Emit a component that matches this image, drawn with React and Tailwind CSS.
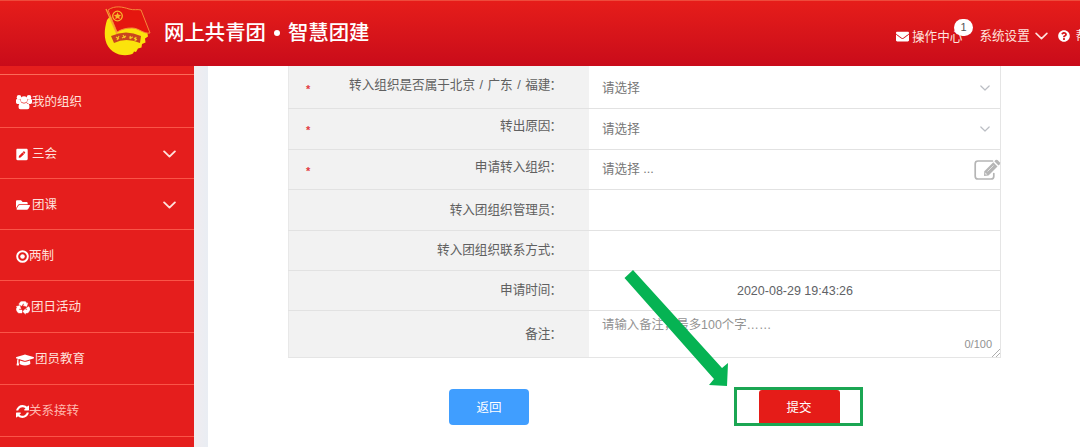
import React from "react";
import { FaPenSquare, FaFolderOpen, FaGraduationCap, FaEnvelope, FaQuestionCircle } from "react-icons/fa";

function Chevron({ className }) {
  return (
    <svg viewBox="0 0 14 8" className={className} fill="none" stroke="currentColor">
      <path d="M1.2 1.2 7 6.8l5.8-5.6" strokeLinecap="round" strokeLinejoin="round" />
    </svg>
  );
}

function UsersIcon({ className }) {
  return (
    <svg viewBox="0 0 16 16" className={className} fill="currentColor">
      <circle cx="3" cy="3.400" r="2.300" />
      <circle cx="13" cy="3.400" r="2.300" />
      <circle cx="8" cy="5.500" r="3.300" />
      <path d="M0 6.300q0-1.300 1.300-1.200l3 .6q.2 2 1.400 3L4 10H1.500Q0 9.800 0 8.500ZM16 6.300q0-1.300-1.300-1.200l-3 .6q-.2 2-1.400 3L12 10h2.500q1.500-.2 1.500-1.500ZM2.500 13q0-4 3-4.200 2.500 1.200 5 0 3 .2 3 4.200 0 2.300-2 2.300h-7q-2 0-2-2.300Z" />
    </svg>
  );
}

function TargetIcon({ className }) {
  return (
    <svg viewBox="0 0 12 12" className={className}>
      <circle cx="6" cy="6" r="4.900" fill="none" stroke="currentColor" strokeWidth="1.800" />
      <circle cx="6" cy="6" r="2.100" fill="currentColor" />
    </svg>
  );
}

function RecycleIcon({ className }) {
  return (
    <svg viewBox="0 0 14 14" className={className} fill="currentColor" stroke="currentColor" strokeWidth=".4">
      <path d="M4.200 1.200Q4.800.4 5.800.4h3q.8 0 1.300.8l.7 1.200 1-.5-1 3.700-3.600-1 1-.6-1-1.700-1.500 2.600-2.900-1.700Z" />
      <path d="m10.300 7.100 2.600-1.500 1 1.800q.4.800 0 1.600l-1.200 2.100q-.5.900-1.600.9H9.500v1.200L6.800 10.500l2.700-2.800V9h1.800Z" />
      <path d="M6 9v3H3.100q-1 0-1.500-.8L.4 9.100q-.4-.8 0-1.600l.8-1.400-1-.6 3.700-1 1 3.600-1-.6L2.700 9Z" />
    </svg>
  );
}

function RefreshIcon({ className }) {
  return (
    <svg viewBox="0 0 1536 1536" className={className} fill="currentColor">
      <path d="M1511 928q0 5-1 7-64 268-268 434.500T764 1536q-146 0-282.500-55T238 1324l-129 129q-19 19-45 19t-45-19-19-45V960q0-26 19-45t45-19h448q26 0 45 19t19 45-19 45l-137 137q71 66 161 102t187 36q134 0 250-65t186-179q11-17 53-117 8-23 30-23h192q13 0 22.500 9.500t9.500 22.500zM1536 128v448q0 26-19 45t-45 19h-448q-26 0-45-19t-19-45 19-45l138-138Q969 256 768 256q-134 0-250 65T332 500q-11 17-53 117-8 23-30 23H50q-13 0-22.500-9.500T18 608v-7q65-268 270-434.500T768 0q146 0 284 55.500T1297 212l130-129q19-19 45-19t45 19 19 45z" />
    </svg>
  );
}

function EditIcon({ className }) {
  return (
    <svg viewBox="0 0 27 22" className={className}>
      <path d="M18.500 2H4Q1.200 2 1.200 4.800v12.400Q1.200 20 4 20h13q2.800 0 2.800-2.800V14.500" fill="none" stroke="currentColor" strokeWidth="1.700" strokeLinecap="round" />
      <path d="m10.300 12.300 9-9 4.200 4.200-9 9-4.500.4Z" fill="currentColor" />
      <path d="m20.300 2.300 1.200-1.200q1-.9 2 0l2.200 2.200q.9 1 0 2l-1.200 1.200Z" fill="currentColor" />
      <path d="m11.300 13.500 1.900 1.900-1.800.2Z" fill="white" />
      <path d="m13.500 12.500 6-6" stroke="white" strokeWidth=".6" />
    </svg>
  );
}

function Emblem() {
  return (
    <svg viewBox="0 0 50 50" className="h-[50px] w-[50px] shrink-0">
      <path d="M4 14C-1 30 2 44 16 48.500c6 1.300 11 .6 14-1l1-2 2 .5 2-3.500 3.500-1 .5-3.500 3.500-1.500-.5-4 3-2-1-6-3-6-8-7-22-6Z" fill="#fbe30c" />
      <path d="M5 4c7-5 15-3 21-1 5 1.500 8 0 12 1l9 23c-7 1-11-5-18-5-6 0-10 1-15 4Z" fill="#e5160f" stroke="#f58a3a" strokeWidth="1" />
      <path d="M3 3 14 28" stroke="#f8a030" strokeWidth="1.300" />
      <circle cx="14.500" cy="10" r="4.800" fill="none" stroke="#f7b52c" strokeWidth="1.300" />
      <path d="m14.500 6.300 1.100 2.500 2.600.2-2 1.700.7 2.600-2.400-1.400-2.300 1.400.6-2.600-2-1.700 2.700-.2Z" fill="#f7b52c" />
      <path d="M8 30q15-7 30 0l-1 7q-14-6-26 0Z" fill="#c9441f" />
      <path d="m13 31 3 2m-2 1 2-4m4-1 2 3m-3 0 4-2m4 0 1 3m-2-1 4-1m3 0-1 4m-1-3 3 2" stroke="#f5cc23" strokeWidth="1.200" />
    </svg>
  );
}

const menu = [
  { label: "我的组织", icon: UsersIcon, size: "h-[16px] w-[16px]", height: "h-[53px]", gap: "" },
  { label: "三会", icon: FaPenSquare, size: "h-[13px] w-[12px]", height: "h-[51px]", gap: "gap-[4px]", open: true },
  { label: "团课", icon: FaFolderOpen, size: "h-[14px] w-[14px]", height: "h-[51px]", gap: "gap-[2px]", open: true },
  { label: "两制", icon: TargetIcon, size: "h-[13px] w-[13px]", height: "h-[51px]", gap: "" },
  { label: "团日活动", icon: RecycleIcon, size: "h-[14px] w-[14px]", height: "h-[52px]", gap: "gap-[1px]" },
  { label: "团员教育", icon: FaGraduationCap, size: "h-[16px] w-[18px]", height: "h-[52px]", gap: "gap-[1px]" },
  { label: "关系接转", icon: RefreshIcon, size: "h-[13px] w-[13px]", height: "h-[52px]", gap: "", dim: true },
];

const rows = [
  { label: "转入组织是否属于北京 / 广东 / 福建", value: "请选择", height: "h-[43px]", pad: "pb-[3px]", valuePad: "pt-[2px]", required: true, kind: "select" },
  { label: "转出原因", value: "请选择", height: "h-[41px]", pad: "pb-[5px]", valuePad: "", required: true, kind: "select" },
  { label: "申请转入组织", value: "请选择 ...", height: "h-[40px]", pad: "pb-[5px]", valuePad: "", required: true, kind: "edit" },
  { label: "转入团组织管理员", height: "h-[41px]", pad: "" },
  { label: "转入团组织联系方式", height: "h-[40px]", pad: "" },
  { label: "申请时间", value: "2020-08-29 19:43:26", height: "h-[40px]", pad: "", kind: "time" },
  { label: "备注", value: "请输入备注，最多100个字……", height: "h-[46px]", pad: "", kind: "textarea" },
];

function Header() {
  return (
    <header className="flex h-[66px] shrink-0 items-start border-t border-[#ee4b3c] bg-linear-to-b from-[#e61d1a] to-[#c90b1a] text-white">
      <div className="flex pl-[103px] pt-[5px]">
        <Emblem />
        <h1 className="flex items-center pt-[4px] pl-[11px] text-[20.4px] leading-[30px] font-medium whitespace-pre">
          网上共青团
          <span className="flex w-[22px] justify-center"><span className="h-[6px] w-[6px] rounded-full bg-white" /></span>
          智慧团建
        </h1>
      </div>
      <nav className="ml-auto flex h-[66px] w-[184px] shrink-0 items-center overflow-hidden pt-[4px] text-[12.600px] text-[#ffe4df]">
        <FaEnvelope className="h-[13px] w-[13px] shrink-0 text-white" />
        <div className="relative ml-[3px] shrink-0 pt-[3px] whitespace-nowrap">
          操作中心
          <span className="absolute -top-[6px] left-[42px] flex h-[17px] w-[19px] items-center justify-center rounded-full bg-white text-[11px] text-[#555]">1</span>
        </div>
        <span className="ml-[17px] shrink-0 whitespace-nowrap">系统设置</span>
        <Chevron className="ml-[5px] h-[8px] w-[13px] shrink-0 stroke-[1.700]" />
        <FaQuestionCircle className="ml-[10px] h-[12px] w-[12px] shrink-0 text-white" />
        <span className="ml-[6px] shrink-0">帮助</span>
      </nav>
    </header>
  );
}

function Sidebar() {
  return (
    <aside className="flex w-[194px] shrink-0 flex-col bg-[#e51e1d]">
      <div className="h-[9px] shrink-0 border-b border-[#fb6b58]" />
      {menu.map(({ label, icon: Icon, size, height, gap, open, dim }) => (
        <div key={label} className={`flex shrink-0 items-center border-b border-[#fa5548] pt-[2px] pr-[18px] pl-[16px] text-[12.500px] ${height} ${gap} ${dim ? "text-[#ffb8ae]" : "text-[#ffe1dc]"}`}>
          <Icon className={`shrink-0 text-white ${size}`} />
          <span className="whitespace-nowrap">{label}</span>
          {open && <Chevron className="ml-auto h-[8px] w-[13px] stroke-2 text-[#ffe1dc]" />}
        </div>
      ))}
    </aside>
  );
}

function Value({ row }) {
  if (row.kind === "time") {
    return <div className="flex flex-1 items-center justify-center pt-[2px] pl-[1px] text-[12.500px] text-[#606266]">{row.value}</div>;
  }
  if (row.kind === "textarea") {
    return (
      <div className="relative flex-1 pt-[4px] pl-[13px] text-[12.400px] leading-[20px] text-[#929292]">
        {row.value}
        <span className="absolute right-[8px] bottom-[3px] text-[11px]">0/100</span>
        <svg viewBox="0 0 8 8" className="absolute right-0 bottom-0 h-[8px] w-[8px]" stroke="#999" strokeWidth=".8"><path d="M0 8 8 0M4 8l4-4" /></svg>
      </div>
    );
  }
  return (
    <div className={`flex flex-1 items-center pl-[13px] text-[12.600px] text-[#777] ${row.valuePad ?? ""}`}>
      <span>{row.value}</span>
      {row.kind === "select" && <Chevron className="mr-[10px] ml-auto h-[6px] w-[10px] stroke-[1.700] text-[#bbbec4]" />}
      {row.kind === "edit" && <EditIcon className="-mr-px ml-auto h-[22px] w-[27px] text-[#b5b5b5]" />}
    </div>
  );
}

function Main() {
  return (
    <main className="flex flex-1 flex-col bg-white pl-[80px]">
      <section className="w-[713px] shrink-0 border-r border-b border-[#e5e5e5]">
        {rows.map((row, i) => (
          <div key={row.label} className={`flex border-[#e2e2e2] ${i < 6 ? "border-b" : ""} ${row.height}`}>
            <div className={`flex w-[301px] shrink-0 items-center border-l border-[#e8e8e8] bg-[#f2f2f2] pr-[27px] pl-[17px] text-[12.600px] text-[#606060] ${row.pad}`}>
              {row.required && <span className="pt-[8px] text-[11px] leading-none font-bold text-[#e23a3f]">*</span>}
              <span className="ml-auto whitespace-nowrap [word-spacing:1px]">{row.label}<span className="-ml-[1px] inline-block">：</span></span>
            </div>
            <Value row={row} />
          </div>
        ))}
      </section>
      <div className="flex items-start pt-[29px] pl-[161px]">
        <button className="mt-[2px] h-[36px] w-[80px] rounded-[4px] bg-[#409eff] pt-[2px] text-[12.500px] text-white">返回</button>
        <div className="relative ml-[205px] flex h-[39px] w-[129px] justify-center border-[3px] border-[#1ba653]">
          <button className="ml-px h-[33px] w-[81px] rounded-t-[3px] bg-[#e51c18] pt-[3px] text-[12.500px] text-white">提交</button>
          <svg viewBox="0 0 108 122" className="pointer-events-none absolute -top-[122px] -left-[115px] h-[122px] w-[108px]">
            <path d="M2.500 10 11 2l89 98 6-5-1 23-18-1 5-6Z" fill="#06b353" />
          </svg>
        </div>
      </div>
    </main>
  );
}

export default function App() {
  return (
    <div className="flex h-[447px] w-[1080px] flex-col overflow-hidden bg-white font-['Liberation_Sans','Noto_Sans_CJK_SC',sans-serif]">
      <Header />
      <div className="flex flex-1 overflow-hidden">
        <Sidebar />
        <div className="w-[14px] shrink-0 bg-linear-to-r from-[#f1edf0] to-[#e9edf3]" />
        <Main />
      </div>
    </div>
  );
}
